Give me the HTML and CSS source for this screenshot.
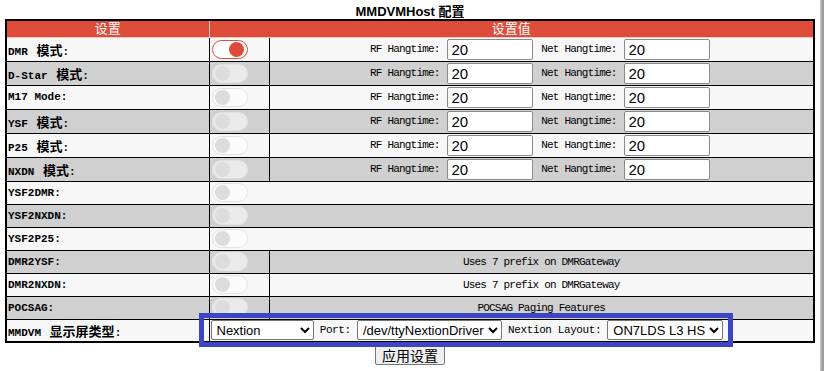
FILE: index.html
```html
<!DOCTYPE html>
<html lang="zh">
<head>
    <meta charset="UTF-8">
    <title>MMDVMHost 配置</title>
    <link rel="stylesheet" href="styles.css">
</head>
<body>
    <div class="page">
        <div class="content">
            <div class="title">MMDVMHost 配置</div>

            <div class="frame">
                <table class="config">
                    <colgroup>
                        <col class="col-label">
                        <col class="col-switch">
                        <col>
                    </colgroup>
                    <tr class="head">
                        <th>设置</th>
                        <th colspan="2">设置值</th>
                    </tr>
                    <tr class="tall">
                        <td class="label">DMR <span class="cjk">模式</span>:</td>
                        <td><span class="switch on"></span></td>
                        <td class="vals">RF Hangtime: <input type="text" value="20"> Net Hangtime: <input type="text" value="20"></td>
                    </tr>
                    <tr class="tall">
                        <td class="label">D-Star <span class="cjk">模式</span>:</td>
                        <td><span class="switch"></span></td>
                        <td class="vals">RF Hangtime: <input type="text" value="20"> Net Hangtime: <input type="text" value="20"></td>
                    </tr>
                    <tr class="tall">
                        <td class="label">M17 Mode:</td>
                        <td><span class="switch"></span></td>
                        <td class="vals">RF Hangtime: <input type="text" value="20"> Net Hangtime: <input type="text" value="20"></td>
                    </tr>
                    <tr class="tall">
                        <td class="label">YSF <span class="cjk">模式</span>:</td>
                        <td><span class="switch"></span></td>
                        <td class="vals">RF Hangtime: <input type="text" value="20"> Net Hangtime: <input type="text" value="20"></td>
                    </tr>
                    <tr class="tall">
                        <td class="label">P25 <span class="cjk">模式</span>:</td>
                        <td><span class="switch"></span></td>
                        <td class="vals">RF Hangtime: <input type="text" value="20"> Net Hangtime: <input type="text" value="20"></td>
                    </tr>
                    <tr class="tall">
                        <td class="label">NXDN <span class="cjk">模式</span>:</td>
                        <td><span class="switch"></span></td>
                        <td class="vals">RF Hangtime: <input type="text" value="20"> Net Hangtime: <input type="text" value="20"></td>
                    </tr>
                    <tr>
                        <td class="label">YSF2DMR:</td>
                        <td colspan="2"><span class="switch"></span></td>
                    </tr>
                    <tr>
                        <td class="label">YSF2NXDN:</td>
                        <td colspan="2"><span class="switch"></span></td>
                    </tr>
                    <tr>
                        <td class="label">YSF2P25:</td>
                        <td colspan="2"><span class="switch"></span></td>
                    </tr>
                    <tr>
                        <td class="label">DMR2YSF:</td>
                        <td><span class="switch"></span></td>
                        <td class="note">Uses 7 prefix on DMRGateway</td>
                    </tr>
                    <tr>
                        <td class="label">DMR2NXDN:</td>
                        <td><span class="switch"></span></td>
                        <td class="note">Uses 7 prefix on DMRGateway</td>
                    </tr>
                    <tr>
                        <td class="label">POCSAG:</td>
                        <td><span class="switch"></span></td>
                        <td class="note">POCSAG Paging Features</td>
                    </tr>
                    <tr>
                        <td class="label">MMDVM <span class="cjk">显示屏类型</span>:</td>
                        <td colspan="2" class="display">
                            <select class="sel-type"><option>Nextion</option></select>
                            Port: <select class="sel-port"><option>/dev/ttyNextionDriver</option></select>
                            Nextion Layout: <select class="sel-layout"><option>ON7LDS L3 HS</option></select>
                        </td>
                    </tr>
                </table>
                <!-- marker drawn over the display settings -->
                <div class="highlight"></div>
            </div>

            <div class="actions">
                <button type="button">应用设置</button>
            </div>
        </div>
        <div class="edge"></div>
    </div>
</body>
</html>
```

FILE: styles.css
```css
:root {
    --red: #dd4b39;
    --row-light: #f7f7f7;
    --row-dark: #d0d0d0;
    --mark: #3c46c0;
    --mono: 'Liberation Mono', 'Noto Sans CJK SC', monospace;
    --sans: 'Liberation Sans', 'Noto Sans CJK SC', sans-serif;
}

* {
    margin: 0;
    padding: 0;
    box-sizing: border-box;
}

body {
    background: #fff;
    color: #000;
    font-family: var(--sans);
}

.page {
    display: flex;
    width: 824px;
    height: 371px;
    overflow: hidden;
}

.content {
    width: 820px;
}

.edge {
    width: 4px;
    background: linear-gradient(90deg, #d4d4d4 0%, #a6a6a6 40%, #9a9a9a 100%);
}

.title {
    text-align: center;
    font-size: 13px;
    font-weight: 700;
    line-height: 15px;
    padding-top: 4px;
}

.frame {
    position: relative;
    width: 810px;
    margin: 0 auto;
}

.config {
    width: 810px;
    table-layout: fixed;
    border-collapse: collapse;
    border: 2px solid #000;
    font-family: var(--mono);
    font-size: 11px;
}

.col-label {
    width: 203px;
}

.col-switch {
    width: 60px;
}

.config th {
    background: var(--red);
    color: #fff;
    font-family: var(--sans);
    font-size: 13px;
    font-weight: 400;
    height: 17px;
    line-height: 15px;
    border: 1px solid #f0c8c2;
}

.config td {
    border: 1px solid #000;
    height: 23px;
    padding: 0 1px;
    white-space: nowrap;
}

.config tr.tall td {
    height: 24px;
}

.config tr:nth-child(even) td {
    background: var(--row-light);
}

.config tr:nth-child(odd) td {
    background: var(--row-dark);
}

.label {
    font-weight: 700;
    padding-left: 1px;
}

.label .cjk {
    font-size: 13px;
    margin-left: 2px;
}

.vals,
.note {
    text-align: center;
    letter-spacing: -0.8px;
}

.vals input {
    width: 86px;
    height: 21px;
    margin: 0 2px;
    padding: 0 3px;
    border: 1px solid #8a8a8a;
    border-radius: 2px;
    font-family: 'Liberation Sans', sans-serif;
    font-size: 15px;
    letter-spacing: 0;
    color: #000;
    vertical-align: middle;
}

.switch {
    position: relative;
    display: block;
    width: 36px;
    height: 19px;
    margin-left: 1px;
    border: 1px solid #e4e4e4;
    border-radius: 10px;
    background: rgba(255, 255, 255, 0.55);
}

.switch::after {
    content: '';
    position: absolute;
    top: 1px;
    left: 2px;
    width: 15px;
    height: 15px;
    border-radius: 50%;
    background: #dcdcdc;
}

.switch.on {
    border-color: var(--red);
    background: #fff;
}

.switch.on::after {
    left: auto;
    right: 3px;
    background: var(--red);
}

.display {
    letter-spacing: -0.4px;
}

.display select {
    height: 20px;
    padding-left: 1px;
    font-family: 'Liberation Sans', sans-serif;
    font-size: 13px;
    letter-spacing: 0;
    color: #000;
    background: #fff;
    border: 1px solid #767676;
    border-radius: 2px;
    vertical-align: middle;
}

.sel-type {
    width: 103px;
}

.sel-port {
    width: 145px;
}

.sel-layout {
    width: 116px;
}

.highlight {
    position: absolute;
    left: 194px;
    top: 294px;
    width: 534px;
    height: 34px;
    border: 5px solid var(--mark);
    pointer-events: none;
}

.actions {
    text-align: center;
    padding-top: 2px;
}

.actions button {
    height: 20px;
    padding: 0 6px;
    font-family: 'Noto Sans CJK SC', sans-serif;
    font-size: 14px;
    line-height: 16px;
    background: #efefef;
    border: 1px solid #767676;
    border-radius: 2px;
    color: #000;
}
```
